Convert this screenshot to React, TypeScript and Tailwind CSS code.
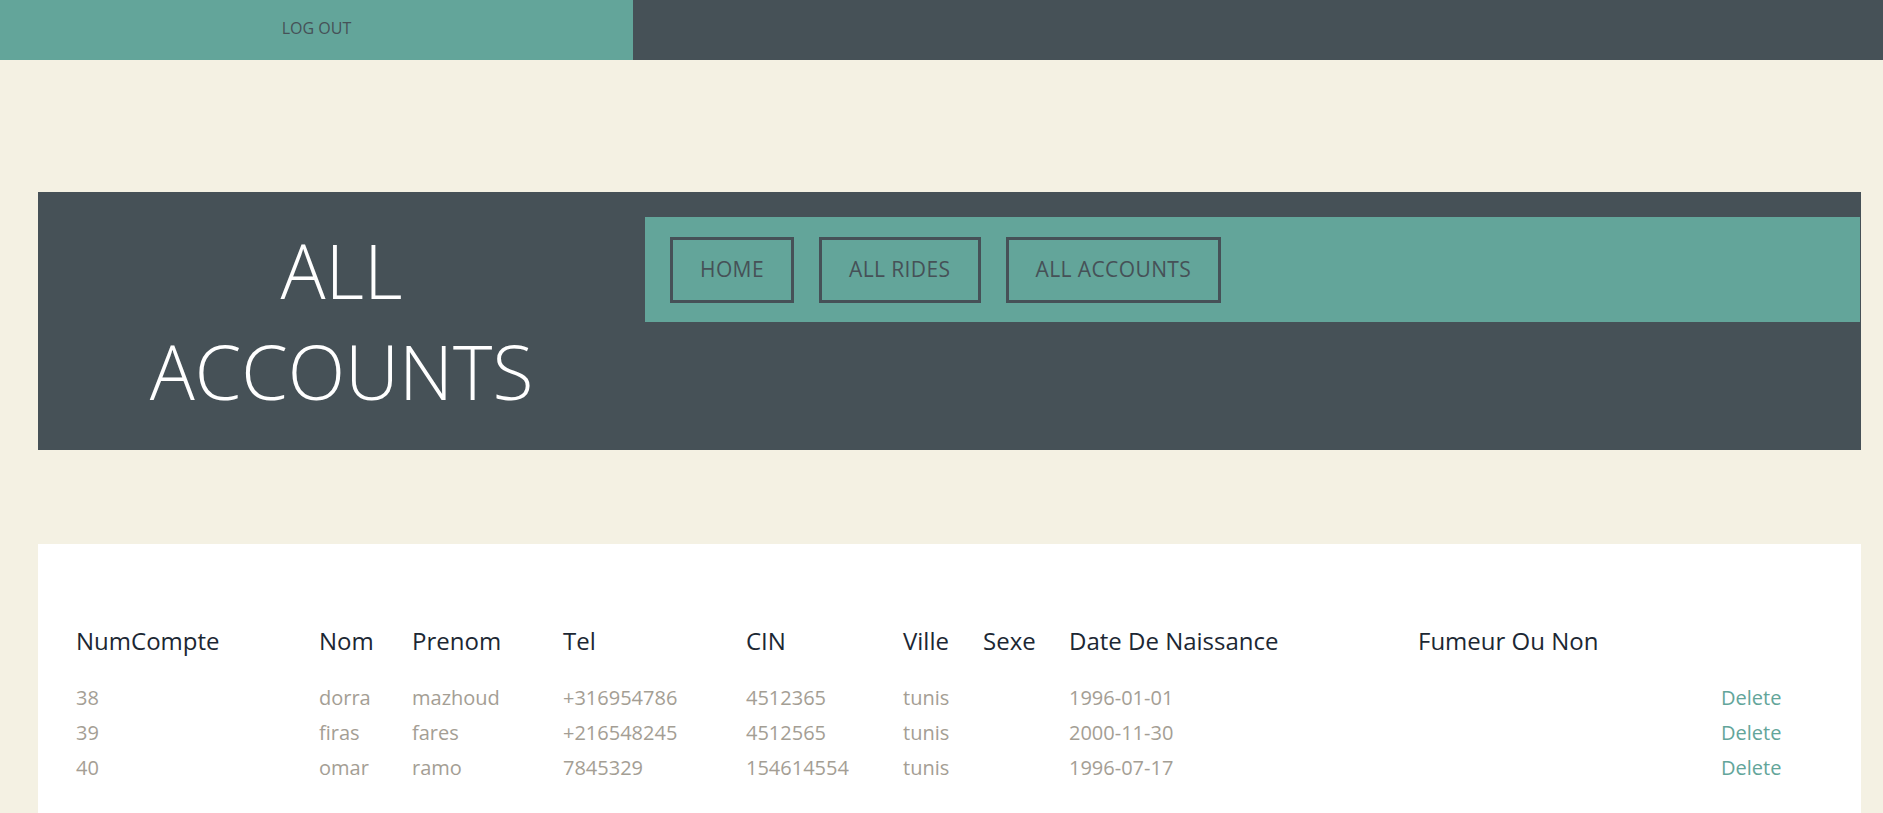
const accounts = [
  { num: "38", nom: "dorra", prenom: "mazhoud", tel: "+316954786", cin: "4512365", ville: "tunis", sexe: "", date: "1996-01-01", fumeur: "" },
  { num: "39", nom: "firas", prenom: "fares", tel: "+216548245", cin: "4512565", ville: "tunis", sexe: "", date: "2000-11-30", fumeur: "" },
  { num: "40", nom: "omar", prenom: "ramo", tel: "7845329", cin: "154614554", ville: "tunis", sexe: "", date: "1996-07-17", fumeur: "" },
];

const headers = ["NumCompte", "Nom", "Prenom", "Tel", "CIN", "Ville", "Sexe", "Date De Naissance", "Fumeur Ou Non", ""];

// largeurs des colonnes reprises de la maquette
const cols = "grid grid-cols-[243px_93px_151px_183px_157px_80px_86px_349px_303px_1fr]";

export default function App() {
  return (
    <div className="min-h-[813px] bg-[#f4f1e3] font-['Open_Sans',sans-serif]">
      {/* Barre du haut */}
      <div className="flex h-[60px] bg-[#465157]">
        <a href="#" className="flex w-[633px] items-center justify-center bg-[#63a59a] pb-[4px] text-[16px] text-[#465157]">
          LOG OUT
        </a>
      </div>

      {/* Bandeau titre + navigation */}
      <div className="ml-[38px] mr-[22px] mt-[132px] flex items-start bg-[#465157]">
        <h1 className="w-[607px] py-[28px] text-center text-[75px] font-light leading-[101px] text-white">
          ALL
          <br />
          ACCOUNTS
        </h1>
        <nav className="mt-[25px] mr-px flex h-[105px] flex-1 items-center gap-[25px] bg-[#63a59a] pl-[25px]">
          {["HOME", "ALL RIDES", "ALL ACCOUNTS"].map((item) => (
            <a
              key={item}
              href="#"
              className="flex h-[66px] items-center border-[3px] border-[#465157] px-[27px] text-[21px] tracking-[0.4px] text-[#465157]"
            >
              {item}
            </a>
          ))}
        </nav>
      </div>

      {/* Tableau des comptes */}
      <div className="ml-[38px] mr-[22px] mt-[94px] bg-white pl-[38px] pt-[80px] pb-[30px]">
        <div className={`${cols} mb-[23px] text-[24px] leading-[33px] text-[#1c2733]`}>
          {headers.map((h, i) => (
            <div key={i} className="whitespace-nowrap">{h}</div>
          ))}
        </div>
        {accounts.map((a) => (
          <div key={a.num} className={`${cols} text-[20px] leading-[35px] text-[#a49e94]`}>
            <div>{a.num}</div>
            <div>{a.nom}</div>
            <div>{a.prenom}</div>
            <div>{a.tel}</div>
            <div>{a.cin}</div>
            <div>{a.ville}</div>
            <div>{a.sexe}</div>
            <div>{a.date}</div>
            <div>{a.fumeur}</div>
            <div>
              <a href="#" className="text-[#63a59a]">Delete</a>
            </div>
          </div>
        ))}
      </div>
    </div>
  );
}
